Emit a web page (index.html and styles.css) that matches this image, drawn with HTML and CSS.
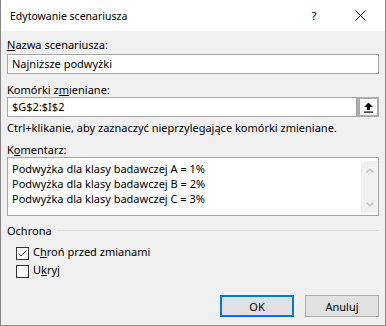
FILE: index.html
```html
<!DOCTYPE html>
<html>
	<head>
		<link rel="stylesheet" href="styles.css">
	</head>
	<body>
		<div class="okno">
			<div class="pasek">
				<span class="tytul">Edytowanie scenariusza</span>
				<span class="pomoc">?</span>
				<span class="zamknij">
					<svg width="11" height="11" viewBox="0 0 11 11"><path d="M0.5 0.5 L10.5 10.5 M10.5 0.5 L0.5 10.5" stroke="#000" stroke-width="1" fill="none"/></svg>
				</span>
			</div>
			<div class="tresc">
				<div class="etykieta et_nazwa"><u>N</u>azwa scenariusza:</div>
				<div class="pole pole_nazwa">Najniższe podwyżki</div>

				<div class="etykieta et_komorki">Komórki z<u>m</u>ieniane:</div>
				<div class="wiersz_komorki">
					<div class="pole pole_komorki">$G$2:$I$2</div>
					<div class="przycisk_zakres">
						<svg width="9" height="11" viewBox="0 0 9 11"><path d="M4.5 0.5 L9 5 L6 5 L6 8 L3 8 L3 5 L0 5 Z" fill="#000"/><rect x="0" y="9.5" width="9" height="1.2" fill="#000"/></svg>
					</div>
				</div>
				<div class="podpowiedz">Ctrl+klikanie, aby zaznaczyć nieprzylegające komórki zmieniane.</div>

				<div class="etykieta et_koment">K<u>o</u>mentarz:</div>
				<div class="komentarz">
					<div class="linie">
						Podwyżka dla klasy badawczej A = 1%<br>
						Podwyżka dla klasy badawczej B = 2%<br>
						Podwyżka dla klasy badawczej C = 3%
					</div>
					<div class="przewijanie">
						<svg width="8" height="5" viewBox="0 0 8 5"><path d="M0.5 4.5 L4 1 L7.5 4.5" stroke="#c2c2c2" stroke-width="1.2" fill="none"/></svg>
						<svg width="8" height="5" viewBox="0 0 8 5"><path d="M0.5 0.5 L4 4 L7.5 0.5" stroke="#c2c2c2" stroke-width="1.2" fill="none"/></svg>
					</div>
				</div>

				<div class="grupa">
					<span>Ochrona</span>
					<div class="linia"></div>
				</div>
				<div class="opcja opcja1">
					<span class="kwadrat">
						<svg width="11" height="11" viewBox="0 0 11 11"><path d="M1.5 5.5 L4 8 L9.5 2.5" stroke="#444" stroke-width="1" fill="none"/></svg>
					</span>
					<span>C<u>h</u>roń przed zmianami</span>
				</div>
				<div class="opcja opcja2">
					<span class="kwadrat"></span>
					<span>U<u>k</u>ryj</span>
				</div>

				<div class="przyciski">
					<button class="btn btn_ok">OK</button>
					<button class="btn">Anuluj</button>
				</div>
			</div>
		</div>
	</body>
</html>
```

FILE: styles.css
```css
body{
	margin: 0;
	font-family: "Noto Sans", sans-serif;
	font-size: 11px;
	color: #000;
}

.okno{
	width: 386px;
	height: 326px;
	box-sizing: border-box;
	border: 1px solid #858585;
	border-top: none;
	background-color: #f0f0f0;
	display: flex;
	flex-direction: column;
}

.pasek{
	height: 31px;
	background-color: #fff;
	display: flex;
	align-items: center;
	padding-left: 9px;
}

.tytul{
	flex: 1;
	font-size: 10.5px;
}

.pomoc{
	width: 22px;
	text-align: center;
	font-size: 11.5px;
	margin-right: 23px;
}

.zamknij{
	width: 24px;
	display: flex;
	justify-content: center;
	margin-right: 13px;
}

.tresc{
	padding: 0 6px;
	display: flex;
	flex-direction: column;
}

.etykieta{
	line-height: 15px;
	height: 15px;
}

.et_nazwa{
	margin-top: 6px;
}

.pole{
	height: 20px;
	box-sizing: border-box;
	border: 1px solid #a6a6a6;
	background-color: #fff;
	padding-left: 4px;
	line-height: 18px;
}

.pole_nazwa{
	margin-top: 2px;
}

.et_komorki{
	margin-top: 8px;
}

.wiersz_komorki{
	display: flex;
}

.pole_komorki{
	flex: 1;
}

.przycisk_zakres{
	width: 22px;
	height: 20px;
	box-sizing: border-box;
	border: 2px solid #ababab;
	border-left-width: 3px;
	background-color: #fbfbfb;
	display: flex;
	align-items: center;
	justify-content: center;
}

.podpowiedz{
	margin-top: 3px;
	line-height: 15px;
}

.et_koment{
	margin-top: 7px;
}

.komentarz{
	height: 59px;
	box-sizing: border-box;
	border: 1px solid #a6a6a6;
	background-color: #fff;
	display: flex;
}

.linie{
	flex: 1;
	padding: 3px 0 0 4px;
	line-height: 15px;
}

.przewijanie{
	width: 17px;
	margin: 3px 0 2px 0;
	background-color: #f0f0f0;
	display: flex;
	flex-direction: column;
	justify-content: space-between;
	align-items: center;
	padding: 7px 0 6px 0;
	box-sizing: border-box;
}

.grupa{
	margin-top: 7px;
	display: flex;
	align-items: center;
	height: 15px;
	line-height: 15px;
}

.linia{
	flex: 1;
	height: 1px;
	background-color: #dcdcdc;
	margin-left: 5px;
}

.opcja{
	display: flex;
	align-items: flex-start;
	height: 15px;
	line-height: 15px;
	padding-left: 9px;
}

.opcja1{
	margin-top: 6px;
}

.opcja2{
	margin-top: 3px;
}

.kwadrat{
	width: 13px;
	height: 13px;
	box-sizing: border-box;
	border: 1px solid #333;
	background-color: #fff;
	margin: 3px 4px 0 0;
	display: flex;
	align-items: center;
	justify-content: center;
}

.przyciski{
	display: flex;
	justify-content: flex-end;
	gap: 11px;
	margin-top: 18px;
}

.btn{
	width: 74px;
	height: 22px;
	box-sizing: border-box;
	border: 1px solid #adadad;
	background-color: #e1e1e1;
	font-family: "Noto Sans", sans-serif;
	font-size: 11px;
	color: #000;
	padding: 0;
}

.btn_ok{
	border: 2px solid #0078d7;
}
```
